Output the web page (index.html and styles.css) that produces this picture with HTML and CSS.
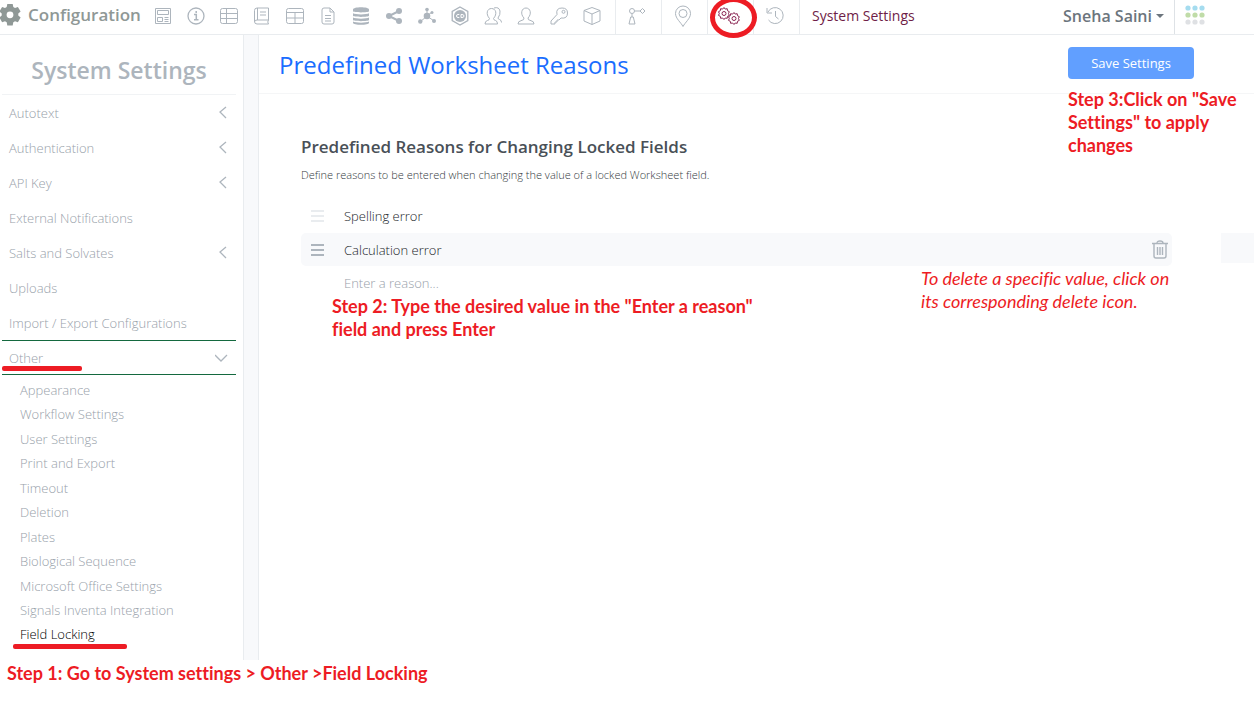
FILE: index.html
```html
<!DOCTYPE html>
<html lang="en">
<head>
  <meta charset="UTF-8">
  <meta name="viewport" content="width=device-width, initial-scale=1.0">
  <title>System Settings</title>
  <link rel="stylesheet" href="styles.css">
</head>
<body>
  <!-- Top bar -->
  <header class="topbar">
    <a class="brand" href="#">
      <svg class="brand-icon" width="22" height="22" viewBox="0 0 22 22"><path fill="#8f9896" fill-rule="evenodd" d="M8.3 0h5.4l.6 3 1.7 1 2.9-1 2.7 4.600-2.300 2v2l2.300 2-2.700 4.600-2.900-1-1.700 1-.6 3.200H8.300l-.6-3.200-1.700-1-2.900 1L.4 13.600l2.300-2v-2l-2.300-2L3.100 3 6 4l1.700-1zM11 7.400a3.400 3.400 0 1 0 0 6.800 3.400 3.400 0 0 0 0-6.800z"/></svg>
      Configuration
    </a>
    <nav class="icons">
      <button class="icon" aria-label="Templates"><svg viewBox="0 0 20 20"><path d="M2.500 2.500h15v15h-15zM4.500 4.500h11v4h-11zM4.500 11.500h5v4h-5zM11.500 11.500h4M11.500 13.500h4M11.500 15.500h4"/></svg></button>
      <button class="icon" aria-label="Information"><svg viewBox="0 0 20 20"><circle cx="10" cy="10" r="8" stroke-width="1.300"/><path stroke-width="1.500" d="M8 8.500h2.300v5M8 13.800h4.500M10.200 5v2"/></svg></button>
      <button class="icon" aria-label="Tables"><svg viewBox="0 0 20 20"><rect x="1.500" y="2.500" width="17" height="15" rx="2"/><path d="M1.500 7.500h17M1.500 12.500h17M7.500 2.500v15"/></svg></button>
      <button class="icon" aria-label="Notebooks"><svg viewBox="0 0 20 20"><path d="M16.500 14V2H5Q2.500 2 2.500 4.500v11Q2.500 18 5 18h11.500M5 14h11.500M5.500 2v12M16.500 14q-1.500 2 0 4M5 14q-2.500 0-2.500 2M8 6h6M8 9h6"/></svg></button>
      <button class="icon" aria-label="Worksheets"><svg viewBox="0 0 20 20"><rect x="1.500" y="2.500" width="17" height="15" rx="2"/><path d="M1.500 6.500h17M1.500 12h17M10 6.500v11"/></svg></button>
      <button class="icon" aria-label="Documents"><svg viewBox="0 0 20 20"><path d="M12 2H6Q4 2 4 4v12q0 2 2 2h8q2 0 2-2V6zM12 2v4h4M7 9.500h6M7 12.500h6M7 15h6"/></svg></button>
      <button class="icon" aria-label="Materials"><svg viewBox="0 0 20 20"><path class="solid" d="M2 3.500c0-3 16-3 16 0v1.800c0 1.500-16 1.500-16 0zM2 7.300c2 1.500 14 1.500 16 0v2.500c0 1.500-16 1.500-16 0zM2 11.500c2 1.500 14 1.500 16 0V14c0 1.500-16 1.500-16 0zM2 15.500c2 1.500 14 1.500 16 0v1.300c0 2.700-16 2.700-16 0z"/></svg></button>
      <button class="icon" aria-label="Sharing"><svg viewBox="0 0 20 20"><path stroke-width="2" d="M15 5L5 10l10 5"/><g class="solid"><circle cx="15" cy="5" r="3"/><circle cx="5" cy="10" r="3"/><circle cx="15" cy="15" r="3"/></g></svg></button>
      <button class="icon" aria-label="Molecules"><svg viewBox="0 0 20 20"><path d="M10 9V4M10 10l-7 6M10 10l7 5M10 10l5-4"/><g class="solid"><circle cx="10" cy="10" r="3.300"/><circle cx="10" cy="3.500" r="1.800"/><circle cx="3.300" cy="15.500" r="2.200"/><circle cx="17" cy="15" r="2"/><circle cx="15" cy="6.500" r="1.500"/></g></svg></button>
      <button class="icon" aria-label="ChemDraw"><svg viewBox="0 0 20 20"><path stroke-width="1.300" d="M10 1l7.800 4.500v9L10 19l-7.800-4.500v-9z"/><circle class="solid" cx="10" cy="10" r="6"/><path class="cut" d="M9.300 8.500H8q-1.500 0-1.500 1.500T8 11.500h1.300M11 8.500h1q2 0 2 1.500t-2 1.500h-1z"/></svg></button>
      <button class="icon" aria-label="Groups"><svg viewBox="0 0 20 20"><path d="M6.500 12.500C2.500 8 4 2.500 8.500 2.500S14.500 8 10.500 12.500q0 1.500 2 2 2 .5 2 3.500H2q0-3 2.500-3.500 2-.5 2-2zM11 2q5-1.500 6 3 .5 3.500-2 7 0 1 1.500 1.500 2 .5 2 3"/></svg></button>
      <button class="icon" aria-label="Users"><svg viewBox="0 0 20 20"><path d="M8 12C4 8 5.500 2 10 2s6 6 2 10q-.5 2 3 2.700 3 .5 3 3.300H2q0-2.800 3-3.300Q8.500 14 8 12z"/></svg></button>
      <button class="icon" aria-label="Security"><svg viewBox="0 0 20 20"><path d="M8 8.500Q6.500 2 13 2q5.500 0 5.500 5 0 6-6.500 5l-2 2H8v2H6v2H2v-3z"/><circle cx="14.500" cy="5.800" r="1.500"/></svg></button>
      <button class="icon" aria-label="Packages"><svg viewBox="0 0 20 20"><path d="M10 1.500l8 3v10.500l-8 3.500-8-3.500V4.500zM2 4.500l8 3.500 8-3.500M10 8v10.500"/></svg></button>
    </nav>
    <nav class="cells">
      <button class="cell" aria-label="Workflow"><svg width="20" height="20" viewBox="0 0 20 20"><circle cx="5" cy="5" r="2.500"/><path d="M7.500 5h5.500M15.500 2.500L18 5l-2.500 2.500L13 5zM3.700 11h2.600L8 18H2zM5 7.500V11"/></svg></button>
      <button class="cell" aria-label="Locations"><svg width="22" height="24" viewBox="0 0 22 24"><path d="M11 22.500C9 18.500 3.500 14.500 3.500 9.500a7.500 7.500 0 0 1 15 0C18.500 14.500 13 18.500 11 22.500z"/><circle cx="11" cy="9.500" r="4"/></svg></button>
      <button class="cell current" aria-label="System settings"><svg width="24" height="20" viewBox="0 0 24 20"><g id="cog"><path d="M7 1.500l1.200 1.600 2-.4.300 2 1.800 1L11.500 7.500l.8 1.900-1.800.9-.3 2-2-.3L7 13.500l-1.400-1.500-2 .3-.3-2-1.800-.9.8-1.900-.8-1.800 1.800-1 .3-2 2 .4z"/><circle cx="7" cy="7.500" r="2"/></g><use href="#cog" x="10" y="5"/></svg></button>
      <button class="cell" aria-label="History"><svg width="20" height="20" viewBox="0 0 20 20"><path d="M3 6a8 8 0 1 1 .5 8M2 2v5h5M10.500 5v5.500l3 2.500"/></svg></button>
    </nav>
    <span class="location">System Settings</span>
    <div class="account">
      <button class="user">Sneha Saini <span class="caret"></span></button>
      <button class="apps" aria-label="Applications"><svg width="20" height="20" viewBox="0 0 20 20"><g fill="#a5dcef"><circle cx="3" cy="3" r="2.600"/><circle cx="10" cy="3" r="2.600"/><circle cx="17" cy="3" r="2.600"/></g><g fill="#c0dca8"><circle cx="3" cy="10" r="2.600"/><circle cx="10" cy="10" r="2.600"/><circle cx="17" cy="10" r="2.600"/></g><g fill="#dfe1e4"><circle cx="3" cy="17" r="2.600"/><circle cx="10" cy="17" r="2.600"/><circle cx="17" cy="17" r="2.600"/></g></svg></button>
    </div>
    <span class="ring"></span>
  </header>

  <div class="layout">
    <!-- Sidebar -->
    <aside class="sidebar">
      <h2 class="sidebar-title">System Settings</h2>
      <ul class="menu">
        <li><a href="#">Autotext <svg class="chevron" viewBox="0 0 14 14"><path d="M11 1L5 6l6 6"/></svg></a></li>
        <li><a href="#">Authentication <svg class="chevron" viewBox="0 0 14 14"><path d="M11 1L5 6l6 6"/></svg></a></li>
        <li><a href="#">API Key <svg class="chevron" viewBox="0 0 14 14"><path d="M11 1L5 6l6 6"/></svg></a></li>
        <li><a href="#">External Notifications</a></li>
        <li><a href="#">Salts and Solvates <svg class="chevron" viewBox="0 0 14 14"><path d="M11 1L5 6l6 6"/></svg></a></li>
        <li><a href="#">Uploads</a></li>
        <li><a href="#">Import / Export Configurations</a></li>
        <li class="open"><a href="#">Other <svg class="chevron" viewBox="0 0 14 14"><path d="M0 4l6 6 6-6"/></svg></a><span class="mark mark-other"></span></li>
      </ul>
      <ul class="submenu">
        <li><a href="#">Appearance</a></li>
        <li><a href="#">Workflow Settings</a></li>
        <li><a href="#">User Settings</a></li>
        <li><a href="#">Print and Export</a></li>
        <li><a href="#">Timeout</a></li>
        <li><a href="#">Deletion</a></li>
        <li><a href="#">Plates</a></li>
        <li><a href="#">Biological Sequence</a></li>
        <li><a href="#">Microsoft Office Settings</a></li>
        <li><a href="#">Signals Inventa Integration</a></li>
        <li class="selected"><a href="#">Field Locking</a><span class="mark mark-locking"></span></li>
      </ul>
    </aside>

    <!-- Content -->
    <main class="content">
      <div class="content-header">
        <h1>Predefined Worksheet Reasons</h1>
        <div class="save">
          <button class="save-button">Save Settings</button>
          <p class="note note-save">Step 3:Click on "Save Settings" to apply changes</p>
        </div>
      </div>
      <section class="reasons">
        <h3>Predefined Reasons for Changing Locked Fields</h3>
        <p class="hint">Define reasons to be entered when changing the value of a locked Worksheet field.</p>
        <div class="reason">
          <span class="handle"></span>
          <span class="reason-text">Spelling error</span>
        </div>
        <div class="reason-line">
          <div class="reason active">
            <span class="handle"></span>
            <span class="reason-text">Calculation error</span>
            <button class="delete" aria-label="Delete"><svg width="16" height="19" viewBox="0 0 16 19"><path d="M0 3.500h16M2 4v12q0 2 2 2h8q2 0 2-2V4M5 3q0-2 3-2t3 2M5.500 7v8M8 7v8M10.500 7v8"/></svg></button>
          </div>
          <span class="strip"></span>
        </div>
        <input class="new-reason" type="text" placeholder="Enter a reason..." aria-label="Enter a reason">
        <p class="note note-enter">Step 2: Type the desired value in the "Enter a reason" field and press Enter</p>
        <p class="note note-delete">To delete a specific value, click on its corresponding delete icon.</p>
      </section>
    </main>
  </div>

  <p class="note note-go">Step 1: Go to System settings &gt; Other &gt;Field Locking</p>
</body>
</html>
```
FILE: styles.css
```css
* {
  box-sizing: border-box;
}
body {
  margin: 0;
  background: #fff;
  color: #495057;
  font-family: "Open Sans", "Noto Sans", sans-serif;
  font-size: 13px;
}
h1, h2, h3, p, ul {
  margin: 0;
  padding: 0;
}
ul {
  list-style: none;
}
a {
  color: inherit;
  text-decoration: none;
}
button {
  padding: 0;
  border: 0;
  background: none;
  font-family: inherit;
  color: inherit;
}

/* Top bar */
.topbar {
  position: relative;
  display: flex;
  height: 35px;
  border-bottom: 1px solid #e9ecef;
}
.brand {
  display: flex;
  align-items: center;
  gap: 7px;
  width: 146px;
  padding-bottom: 5px;
  color: #8f9896;
  font-size: 17px;
  font-weight: 600;
}
.brand-icon {
  margin-left: -1px;
}
.icons {
  display: flex;
  padding-right: 7px;
}
.icon {
  width: 33px;
  padding-bottom: 3px;
}
.icon svg,
.cell svg {
  display: block;
  margin: 0 auto;
  fill: none;
  stroke: #adb5bd;
}
.icon svg {
  width: 20px;
  height: 20px;
}
.icon .solid {
  fill: #adb5bd;
  stroke: none;
}
.icon .cut {
  stroke: #fff;
}
.cells {
  display: flex;
  border-left: 1px solid #e9ecef;
}
.cell {
  width: 46px;
  padding: 0 3px 3px 0;
  border-right: 1px solid #e9ecef;
}
.cell.current svg {
  stroke: #8a2452;
}
.location {
  padding-left: 12px;
  color: #6f1d47;
  font-size: 14px;
  line-height: 32px;
}
.account {
  display: flex;
  margin-left: auto;
  margin-right: 39px;
}
.user {
  display: flex;
  align-items: center;
  gap: 4px;
  padding-right: 10px;
  padding-bottom: 3px;
  border-right: 1px solid #dee2e6;
  color: #6c757d;
  font-size: 16px;
  font-weight: 600;
}
.caret {
  border: 4px solid transparent;
  border-top-color: #6c757d;
  border-bottom: 0;
}
.apps {
  width: 40px;
  padding-bottom: 4px;
}
.apps svg {
  display: block;
  margin: 0 auto;
}
.ring {
  position: absolute;
  top: -3px;
  left: 710px;
  width: 47px;
  height: 41px;
  border: 5px solid #ed1c24;
  border-radius: 50%;
}

/* Layout */
.layout {
  display: flex;
  background: #f8f9fb;
}
.sidebar {
  width: 244px;
  padding: 0 7px 13px 2px;
  border-right: 1px solid #e9ecef;
  background: #fff;
}
.sidebar-title {
  height: 60px;
  border-bottom: 1px solid #f1f3f5;
  color: #adb5bd;
  font-size: 23px;
  font-weight: 600;
  line-height: 70px;
  text-align: center;
}
.menu,
.submenu {
  color: #98a1aa;
  font-weight: 300;
}
.menu li {
  position: relative;
}
.menu a {
  display: flex;
  align-items: center;
  justify-content: space-between;
  height: 35px;
  padding: 0 7px;
}
.menu .open {
  border-top: 1px solid #14693f;
  border-bottom: 1px solid #14693f;
}
.menu .open a {
  height: 33px;
}
.chevron {
  width: 14px;
  height: 14px;
  fill: none;
  stroke: #adb5bd;
  stroke-width: 1.3;
}
.submenu {
  padding: 3px 0 0 18px;
  line-height: 1.88;
}
.submenu li {
  position: relative;
}
.submenu .selected {
  color: #000;
}
.mark {
  position: absolute;
  height: 5px;
  border-radius: 2px;
  background: #ed1c24;
}
.mark-other {
  left: 0;
  bottom: 3px;
  width: 80px;
}
.mark-locking {
  left: -7px;
  bottom: -2px;
  width: 114px;
}

/* Content */
.content {
  flex: 1;
  margin-left: 14px;
  border-left: 1px solid #e9ecef;
  background: #fff;
}
.content-header {
  display: flex;
  justify-content: space-between;
  height: 59px;
  padding: 12px 60px 0 20px;
  border-bottom: 1px solid #f5f6f7;
}
h1 {
  color: #1a6dff;
  font-size: 24px;
  font-weight: 380;
  line-height: 36px;
}
.save {
  position: relative;
  width: 126px;
}
.save-button {
  width: 100%;
  height: 32px;
  border-radius: 4px;
  background: #619fff;
  color: #fff;
  font-size: 13px;
  font-weight: 500;
}
.reasons {
  position: relative;
  padding: 40px 0 0 42px;
}
h3 {
  font-size: 17px;
  font-weight: 600;
  line-height: 26px;
}
.hint {
  margin: 5px 0 14px;
  font-size: 11px;
  font-weight: 300;
  line-height: 20px;
  color: #343a40;
}
.reason {
  display: flex;
  align-items: center;
  flex: 1;
  height: 33px;
  padding: 0 4px 0 10px;
  border-radius: 5px;
}
.reason-line {
  display: flex;
  align-items: flex-start;
  gap: 49px;
  padding-top: 1px;
}
.reason.active {
  background: #f8f9fb;
}
.strip {
  width: 33px;
  height: 30px;
  background: #f8f9fb;
}
.handle {
  width: 13px;
  height: 12px;
  border-top: 2px solid #e9ecef;
  border-bottom: 2px solid #e9ecef;
  background: linear-gradient(#e9ecef, #e9ecef) center / 100% 2px no-repeat;
}
.active .handle {
  border-color: #adb5bd;
  background-image: linear-gradient(#adb5bd, #adb5bd);
}
.reason-text {
  padding-left: 20px;
  color: #212529;
  font-weight: 300;
}
.delete {
  margin-left: auto;
}
.delete svg {
  display: block;
  fill: none;
  stroke: #adb5bd;
  stroke-width: 1.4;
}
.new-reason {
  display: block;
  width: 500px;
  height: 29px;
  padding: 5px 0 0 43px;
  border: 0;
  outline: 0;
  background: transparent;
  font: 300 13px "Open Sans", "Noto Sans", sans-serif;
}
.new-reason::placeholder {
  color: #98a1aa;
}

/* Walkthrough notes */
.note {
  color: #ed1c24;
  font-family: Lato, "Open Sans", sans-serif;
  font-size: 18px;
  font-weight: 700;
  font-variant-ligatures: none;
  line-height: 23px;
}
.note-save {
  position: absolute;
  top: 41px;
  left: 0;
  width: 180px;
}
.note-enter {
  width: 440px;
  margin-left: 31px;
}
.note-delete {
  position: absolute;
  top: 173px;
  right: 68px;
  width: 265px;
  font-style: italic;
  font-weight: 400;
}
.note-go {
  padding: 2px 7px;
}
```
